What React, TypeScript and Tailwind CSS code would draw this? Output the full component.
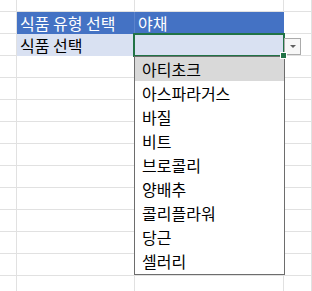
const items = ["아티초크", "아스파라거스", "바질", "비트", "브로콜리", "양배추", "콜리플라워", "당근", "셀러리"];

const widths = ["w-[17px]", "w-[118px]", "w-[149px]", "w-[28px]"];

type Cell = { bg?: string; line?: string; text?: string; color?: string; z?: string; children?: React.ReactNode };

function Row({ cells, h = "h-[22px]" }: { cells: Cell[]; h?: string }) {
  return (
    <div className={`flex ${h}`}>
      {cells.map((c, i) => (
        <div
          key={i}
          className={`relative ${c.z ?? ""} ${widths[i]} shrink-0 box-border border-b border-r ${c.line ?? "border-[#e1e1e1]"} ${c.bg ?? ""} ${c.color ?? "text-black"} flex items-center px-[3px] text-[16px] leading-none whitespace-nowrap`}
        >
          {c.text}
          {c.children}
        </div>
      ))}
    </div>
  );
}

function Dropdown() {
  return (
    <>
      {/* selected cell outline */}
      <div className="absolute left-[-2px] top-[-1px] w-[152px] h-[24px] border-2 border-[#217346]" />
      <div className="absolute left-[146px] top-[19px] w-[5px] h-[5px] bg-[#217346] outline outline-1 outline-white z-10" />

      {/* arrow button */}
      <div className="absolute left-[149px] top-[4px] w-[17px] h-[17px] border border-[#ababab] bg-[#f7f7f7] flex items-center justify-center">
        <div className="w-0 h-0 border-l-[3px] border-r-[3px] border-t-[3px] border-l-transparent border-r-transparent border-t-[#5f5f5f]" />
      </div>

      {/* list */}
      <div className="absolute left-[-1px] top-[22px] w-[151px] h-[219px] border border-[#6d6d6d] bg-white flex flex-col">
        {items.map((t, i) => (
          <div
            key={t}
            className={`h-[24px] shrink-0 flex items-center pl-[7px] text-[16px] leading-none text-black ${i === 0 ? "bg-[#d9d9d9]" : ""}`}
          >
            {t}
          </div>
        ))}
      </div>
    </>
  );
}

export default function App() {
  const blank: Cell[] = [{}, {}, {}, {}];
  return (
    <div className="w-[312px] h-[291px] overflow-hidden bg-white" style={{ fontFamily: '"Noto Sans CJK KR", "Noto Sans", sans-serif' }}>
      <Row cells={blank} h="h-[12px]" />
      <Row
        cells={[
          {},
          { bg: "bg-[#4472c4]", line: "border-[#4472c4] border-r-[#5b83cc]", text: "식품 유형 선택", color: "text-white" },
          { bg: "bg-[#4472c4]", line: "border-[#4472c4]", text: "야채", color: "text-white" },
          {},
        ]}
      />
      <Row
        cells={[
          {},
          { bg: "bg-[#d9e1f2]", line: "border-[#d9e1f2]", text: "식품 선택" },
          { bg: "bg-[#d9e1f2]", line: "border-[#d9e1f2]", z: "z-20", children: <Dropdown /> },
          {},
        ]}
      />
      {Array.from({ length: 11 }).map((_, i) => (
        <Row key={i} cells={blank} />
      ))}
    </div>
  );
}
